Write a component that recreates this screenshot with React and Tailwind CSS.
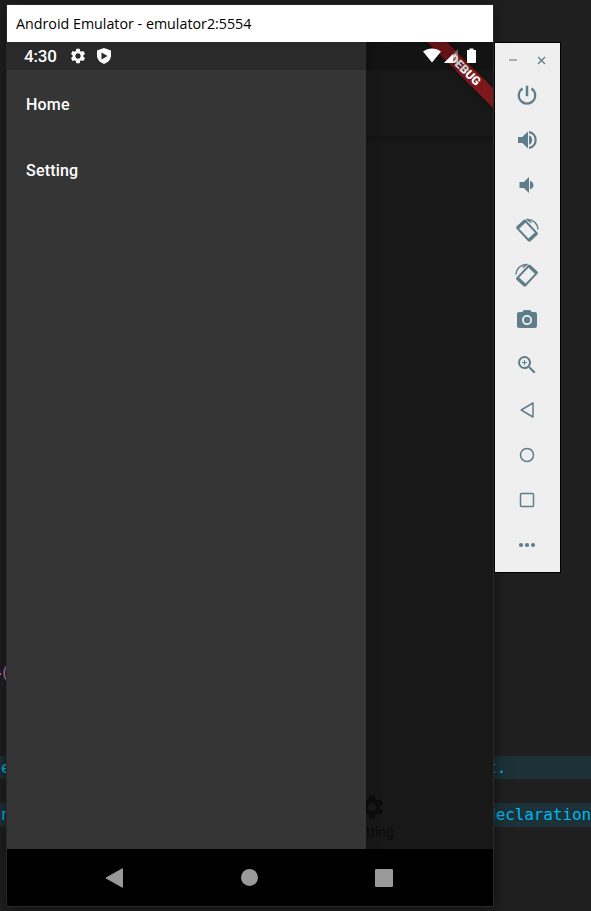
import React from "react";
import { MdPhotoCamera, MdZoomIn, MdSettings } from "react-icons/md";

function Power() {
  return (
    <svg width="20" height="20" viewBox="0 0 20 20" fill="none" stroke="currentColor">
      <path d="M10 .700v10.500" strokeWidth="2.500" />
      <path d="M5.600 3.500a8.200 8.200 0 1 0 8.800 0" strokeWidth="2.200" />
    </svg>
  );
}

function VolumeUp() {
  return (
    <svg width="20" height="20" viewBox="0 0 20 20" fill="none">
      <path d="M1 7h4.2L11 1.5v17L5.200 13H1z" fill="currentColor" />
      <path d="M12 5.200c4.200 1.100 4.200 8.500 0 9.600z" fill="currentColor" />
      <path d="M12 2.200c8.800 1.300 8.800 14.300 0 15.600" stroke="currentColor" strokeWidth="2.200" />
    </svg>
  );
}

function VolumeDown() {
  return (
    <svg width="20" height="20" viewBox="0 0 20 20" fill="currentColor">
      <path d="M2.500 7h4.300L12 2v16l-5.200-5H2.500z" />
      <path d="M13 5.700c4.600 1.200 4.600 7.400 0 8.600z" />
    </svg>
  );
}

function Rotate({ flip }) {
  return (
    <svg width="24" height="24" viewBox="0 0 24 24" className={flip ? "-scale-x-100" : ""}>
      <g transform="translate(12 12.600) rotate(-43)">
        <rect x="-5.400" y="-9" width="10.800" height="18" rx="1.200" fill="none" stroke="currentColor" strokeWidth="2" />
        <rect x="-6" y="-10" width="12" height="3.200" rx="1.200" fill="currentColor" />
        <rect x="-6" y="6.800" width="12" height="3.200" rx="1.200" fill="currentColor" />
      </g>
      <path d="M11.300 1.500C18 .800 22.700 5.500 23 11.500M12 1.500l4.500 3.300" fill="none" stroke="currentColor" strokeWidth="1.400" />
    </svg>
  );
}

const controls = [
  { name: "Power", icon: <Power /> },
  { name: "Volume up", icon: <VolumeUp /> },
  { name: "Volume down", icon: <VolumeDown /> },
  { name: "Rotate left", icon: <Rotate /> },
  { name: "Rotate right", icon: <Rotate flip /> },
  { name: "Take screenshot", icon: <MdPhotoCamera size={24} /> },
  { name: "Zoom", icon: <MdZoomIn size={24} /> },
  {
    name: "Back",
    icon: (
      <svg width="18" height="18" viewBox="0 0 18 18" fill="none" stroke="currentColor" strokeWidth="1.500" strokeLinejoin="round">
        <path d="M3.200 9 15 2v14z" />
      </svg>
    ),
  },
  {
    name: "Home",
    icon: (
      <svg width="18" height="18" viewBox="0 0 18 18" fill="none" stroke="currentColor" strokeWidth="1.500">
        <circle cx="9" cy="9" r="6.500" />
      </svg>
    ),
  },
  {
    name: "Overview",
    icon: (
      <svg width="18" height="18" viewBox="0 0 18 18" fill="none" stroke="currentColor" strokeWidth="1.500">
        <rect x="2.500" y="2.500" width="13" height="13" rx="1" />
      </svg>
    ),
  },
  {
    name: "More",
    icon: (
      <svg width="18" height="6" viewBox="0 0 18 6" fill="currentColor">
        <circle cx="3" cy="3" r="2.100" />
        <circle cx="9" cy="3" r="2.100" />
        <circle cx="15" cy="3" r="2.100" />
      </svg>
    ),
  },
];

function Editor() {
  return (
    <div className="h-full pt-[661px] font-['DejaVu_Sans_Mono',monospace] text-[16px] leading-6 whitespace-pre text-[#00b8ec]">
      <div className="flex h-[95px]">
        <span className="mt-[12px] h-[1.500px] w-px bg-[#d7832f]" />
        <span className="-ml-[1px] text-[#c678dd]">(</span>
      </div>
      <div className="flex h-[23px] bg-[#1c3238] pl-px">
        <span className="w-[486px]">e</span>
        <span>t.</span>
      </div>
      <div className="h-6" />
      <div className="flex h-6 bg-[#1c3238] leading-[23px]">
        <span className="w-[487px] pl-px">n</span>
        <span className="tracking-[-0.100px]">declaration</span>
      </div>
    </div>
  );
}

function StatusBar() {
  return (
    <div className="absolute inset-x-0 top-0 flex h-7 items-center bg-black/20 pl-[17px] text-white">
      <span className="w-[45px] pt-[2px] text-[17px] font-medium tracking-[-0.150px]">4:30</span>
      <MdSettings size={18} />
      <svg width="16" height="18" viewBox="0 0 16 18" className="ml-[9px]">
        <path d="M8 1 15 3.500v5c0 4-3 7-7 8.500-4-1.500-7-4.500-7-8.500v-5z" fill="white" />
        <path d="m5.500 5.500 6 3.500-6 3.500z" fill="#292929" />
      </svg>
    </div>
  );
}

function Signals() {
  return (
    <svg width="54" height="18" viewBox="0 0 54 18" className="absolute top-[5px] right-[16px]">
      <path d="M0 4.500C5.500.500 12.500.500 18 4.500L9 15.500z" fill="white" />
      <path d="M21 16 35 2v14z" fill="white" opacity=".35" />
      <path d="M21 16 30 7v9z" fill="white" />
      <path d="M46.500 1.500h4V3H53v12.200q0 .800-.800.800h-7.400q-.800 0-.800-.800V3h2.500z" fill="white" />
    </svg>
  );
}

function Phone() {
  return (
    <div className="relative flex flex-1 overflow-hidden bg-[#181818] font-[Roboto,sans-serif]">
      <nav className="z-10 flex w-[359px] flex-col bg-[#353535] pt-[51px] pl-[19px] text-[16px] leading-6 font-medium tracking-[0.200px] text-white">
        <a className="h-[66px]">Home</a>
        <a>Setting</a>
      </nav>
      <main className="flex flex-1 flex-col justify-between bg-linear-to-r from-[#151515] to-[#181818] to-15%">
        <header className="h-[94px] shadow-[0_2px_4px_#111111]" />
        <footer className="-ml-[22px] flex w-[56px] flex-col items-center pb-[7px] text-[14px] leading-5 text-[#0b0b0b]">
          <MdSettings size={28} />
          <span className="mt-px">Setting</span>
        </footer>
      </main>
      <div className="absolute top-[21px] -right-[42px] z-20 flex h-[14px] w-[140px] rotate-[45deg] items-center justify-center bg-[#7c181b] text-[12px] font-black text-white shadow-[0_0_5px_#0008]">
        DEBUG
      </div>
      <div className="absolute inset-0 z-20">
        <StatusBar />
        <Signals />
      </div>
    </div>
  );
}

export default function App() {
  return (
    <div className="relative h-[911px] w-[591px] overflow-hidden bg-[#1f1f1f]">
      <Editor />

      <section className="absolute top-[5px] left-[7px] flex h-[901px] w-[486px] flex-col shadow-[0_0_0_1px_#292929,0_2px_14px_#0009]">
        <div className="flex h-[37px] items-center bg-white pl-[9px] font-['Open_Sans',sans-serif] text-[14.500px] text-black">
          <span className="origin-left scale-x-[0.984] whitespace-nowrap">Android Emulator - emulator2:5554</span>
        </div>
        <Phone />
        <div className="flex h-[57px] items-center bg-black pl-[98px]">
          <svg width="19" height="20" viewBox="0 0 19 20">
            <path d="M1 10 17.500.700v18.600z" fill="#999" stroke="#999" strokeLinejoin="round" />
          </svg>
          <span className="ml-[117px] size-[17px] rounded-full bg-[#999]" />
          <span className="ml-[117px] size-[18px] rounded-[1px] bg-[#999]" />
        </div>
      </section>

      <aside className="absolute top-[42px] left-[494px] flex h-[531px] w-[67px] flex-col border border-black bg-[#efefef] text-[#607d8b]">
        <div className="flex h-[29px] shrink-0 items-center justify-between pt-[5px] pr-[14px] pl-[14px]">
          <span className="h-[2px] w-2 bg-[#9fb0b8]" />
          <svg width="9" height="9" viewBox="0 0 9 9" stroke="currentColor" strokeWidth="1.300">
            <path d="m1 1 7 7M8 1 1 8" />
          </svg>
        </div>
        {controls.map((c) => (
          <button key={c.name} className="flex h-[45px] w-[64px] shrink-0 items-center justify-center">
            {c.icon}
          </button>
        ))}
      </aside>
    </div>
  );
}
